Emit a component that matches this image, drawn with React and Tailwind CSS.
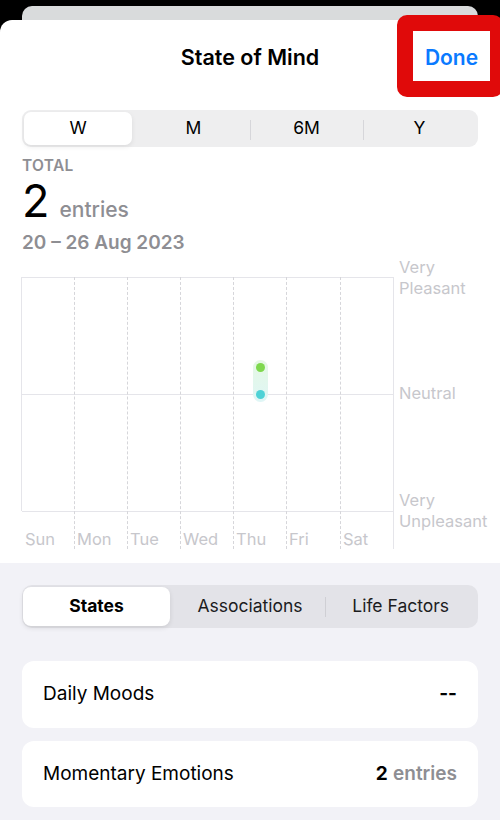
import React from "react";

const font = { fontFamily: "Inter, 'Noto Sans', sans-serif" };

const days = ["Sun", "Mon", "Tue", "Wed", "Thu", "Fri", "Sat"];
const ranges = ["W", "M", "6M", "Y"];

function RangePicker() {
  return (
    <div className="mx-[22px] mt-[16px] h-[37px] rounded-[9px] bg-[#eeeeef] p-[2px] grid grid-cols-4">
      {ranges.map((r, i) => (
        <div key={r} className="relative flex items-center justify-center">
          {i >= 2 && <div className="absolute left-0 top-[8px] h-[20px] w-px bg-[#d6d6da]" />}
          {i === 0 ? (
            <div className="h-full w-[108px] mr-auto rounded-[7px] bg-white shadow-[0_2px_5px_rgba(0,0,0,0.08)] flex items-center justify-center text-[17.5px] text-black">
              {r}
            </div>
          ) : (
            <span className="text-[17.5px] text-black">{r}</span>
          )}
        </div>
      ))}
    </div>
  );
}

function Chart() {
  const cols = [74, 127, 180, 233, 286, 340];
  return (
    <div className="relative h-[306px] shrink-0">
      {/* horizontal rules */}
      <div className="absolute left-[22px] top-[20px] w-[371px] h-px bg-[#e5e5ea]" />
      <div className="absolute left-[22px] top-[137px] w-[371px] h-px bg-[#e5e5ea]" />
      <div className="absolute left-[22px] top-[254px] w-[371px] h-px bg-[#e5e5ea]" />
      <div className="absolute left-[21px] top-[20px] w-px h-[234px] bg-[#e5e5ea]" />
      <div className="absolute left-[393px] top-[20px] w-px h-[272px] bg-[#e5e5ea]" />
      {cols.map((x) => (
        <div
          key={x}
          className="absolute top-[20px] h-[272px] w-0 border-l border-dashed border-[#d6d6da]"
          style={{ left: x }}
        />
      ))}
      {days.map((d, i) => (
        <span
          key={d}
          className="absolute top-[271px] text-[16.5px] leading-[22px] text-[#c7c7cc]"
          style={{ left: (i === 0 ? 25 : cols[i - 1] + 3) }}
        >
          {d}
        </span>
      ))}
      {/* entries on Thu */}
      <div className="absolute left-[253px] top-[103px] w-[15px] h-[42px] rounded-full bg-gradient-to-b from-[#e6f8e3] to-[#dff6f6]" />
      <div className="absolute left-[256px] top-[106px] w-[9px] h-[9px] rounded-full bg-[#7fd84e]" />
      <div className="absolute left-[256px] top-[133px] w-[9px] h-[9px] rounded-full bg-[#4fd2d6]" />
      {/* y labels */}
      <div className="absolute left-[399px] top-[0px] text-[16.5px] leading-[21px] text-[#c7c7cc]">
        Very<br />Pleasant
      </div>
      <div className="absolute left-[399px] top-[126px] text-[16.5px] leading-[21px] text-[#c7c7cc]">
        Neutral
      </div>
      <div className="absolute left-[399px] top-[233px] text-[16.5px] leading-[21px] text-[#c7c7cc]">
        Very<br />Unpleasant
      </div>
    </div>
  );
}

function Tabs() {
  const tabs = ["States", "Associations", "Life Factors"];
  return (
    <div className="mx-[22px] h-[43px] rounded-[10px] bg-[#e3e3e8] p-[2px] grid grid-cols-3">
      {tabs.map((t, i) => (
        <div key={t} className="relative flex items-center justify-center">
          {i === 2 && <div className="absolute left-0 top-[10px] h-[20px] w-px bg-[#cfcfd4]" />}
          {i === 0 ? (
            <div className="h-full w-[147px] mr-auto -ml-px rounded-[8px] bg-white shadow-[0_2px_5px_rgba(0,0,0,0.1)] flex items-center justify-center text-[17.5px] font-bold text-black">
              {t}
            </div>
          ) : (
            <span className="text-[17.5px] text-[#1c1c1e]">{t}</span>
          )}
        </div>
      ))}
    </div>
  );
}

function Row({ label, children, h }) {
  return (
    <div className={`mx-[22px] ${h} rounded-[12px] bg-white flex items-center justify-between px-[21px]`}>
      <span className="text-[19px] text-black">{label}</span>
      {children}
    </div>
  );
}

export default function App() {
  return (
    <div className="relative w-[500px] h-[820px] overflow-hidden bg-black" style={font}>
      <div className="h-[20px] pt-[6px]">
        <div className="mx-[22px] h-[14px] rounded-t-[10px] bg-[#d9dbdc]" />
      </div>
      <div className="h-[800px] rounded-t-[12px] bg-white flex flex-col">
        <div className="h-[74px] pt-[1px] flex items-center justify-center">
          <h1 className="text-[21.5px] font-semibold text-black">State of Mind</h1>
        </div>
        <RangePicker />
        <div className="px-[22px] mt-[9px]">
          <div className="text-[15.5px] font-semibold leading-[20px] tracking-[0.3px] text-[#8e8e93]">TOTAL</div>
          <div className="flex items-baseline gap-[10px] h-[50px] leading-[50px]">
            <span className="text-[45px] text-black">2</span>
            <span className="text-[21px] font-medium text-[#8e8e93]">entries</span>
          </div>
          <div className="mt-[7px] text-[19px] font-semibold leading-[20px] text-[#8e8e93]">20 – 26 Aug 2023</div>
        </div>
        <div className="h-[4px] shrink-0" />
        <Chart />
        <div className="flex-1 bg-[#f2f2f7] pt-[22px]">
          <Tabs />
          <div className="mt-[33px] flex flex-col gap-[13px]">
            <Row label="Daily Moods" h="h-[67px]">
              <span className="text-[19px] font-bold text-black">--</span>
            </Row>
            <Row label="Momentary Emotions" h="h-[66px]">
              <span className="text-[19px]">
                <span className="font-bold text-black">2</span>{" "}
                <span className="font-semibold text-[#8e8e93]">entries</span>
              </span>
            </Row>
          </div>
        </div>
      </div>
      {/* highlight box round the Done button */}
      <div className="absolute left-[397px] top-[15px] w-[106px] h-[82px] rounded-[10px] border-[16px] border-r-[13px] border-[#e00a0a] bg-white flex items-center justify-center pt-[3px]">
        <span className="text-[21px] font-semibold text-[#0a7aff]">Done</span>
      </div>
    </div>
  );
}
